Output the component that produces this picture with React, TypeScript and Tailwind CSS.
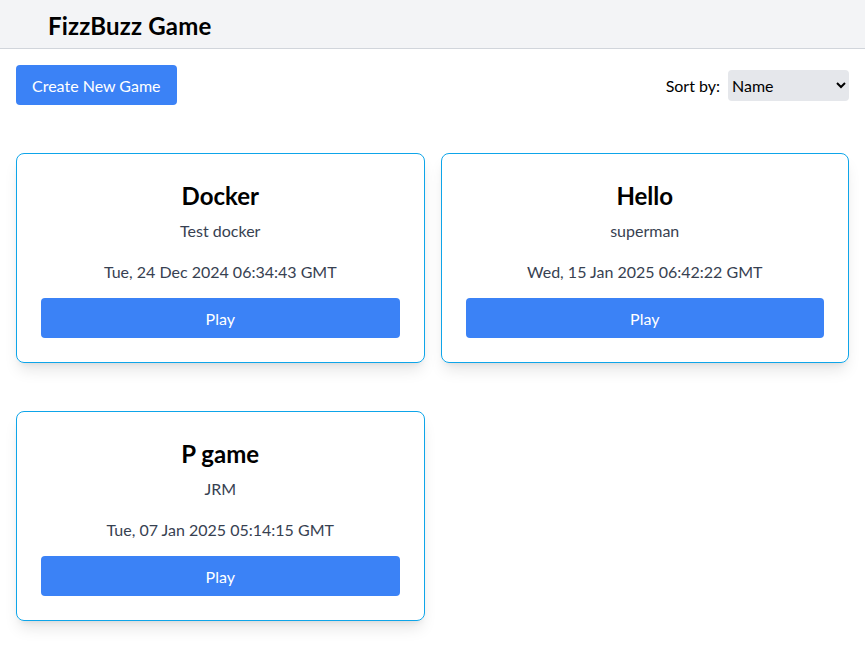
import React from "react";

const games = [
  { name: "Docker", description: "Test docker", date: "Tue, 24 Dec 2024 06:34:43 GMT" },
  { name: "Hello", description: "superman", date: "Wed, 15 Jan 2025 06:42:22 GMT" },
  { name: "P game", description: "JRM", date: "Tue, 07 Jan 2025 05:14:15 GMT" },
];

export default function App() {
  return (
    <div className="min-h-screen bg-white text-black font-['Lato',sans-serif]">
      <header className="bg-[#f3f4f6] border-b border-[#d1d5db] px-12 pt-[10px] pb-[6px]">
        <h1 className="text-2xl font-bold leading-8 tracking-[0.2px]">FizzBuzz Game</h1>
      </header>

      <main className="p-4">
        <div className="flex items-center justify-between mb-12">
          <button className="bg-[#3b82f6] text-white px-4 pt-[9px] pb-[7px] rounded">Create New Game</button>
          <div className="flex items-center gap-2 pt-px">
            <label htmlFor="sort">Sort by:</label>
            <select
              id="sort"
              className="bg-[#e5e7eb] rounded w-[121px] h-[31px] px-0"
              defaultValue="name"
            >
              <option value="name">Name</option>
              <option value="date">Date</option>
            </select>
          </div>
        </div>

        <div className="grid grid-cols-2 gap-x-4 gap-y-12">
          {games.map((game, idx) => (
            <div
              key={idx}
              className="border border-[#0ea5e9] rounded-lg shadow-lg px-6 pt-[26px] pb-6 text-center"
            >
              <h2 className="text-2xl font-bold">{game.name}</h2>
              <p className="mt-[7px] text-[#374151]">{game.description}</p>
              <p className="mt-[17px] text-[#374151]">{game.date}</p>
              <button className="mt-[14px] w-full bg-[#3b82f6] text-white pt-[9px] pb-[7px] rounded">Play</button>
            </div>
          ))}
        </div>
      </main>
    </div>
  );
}
